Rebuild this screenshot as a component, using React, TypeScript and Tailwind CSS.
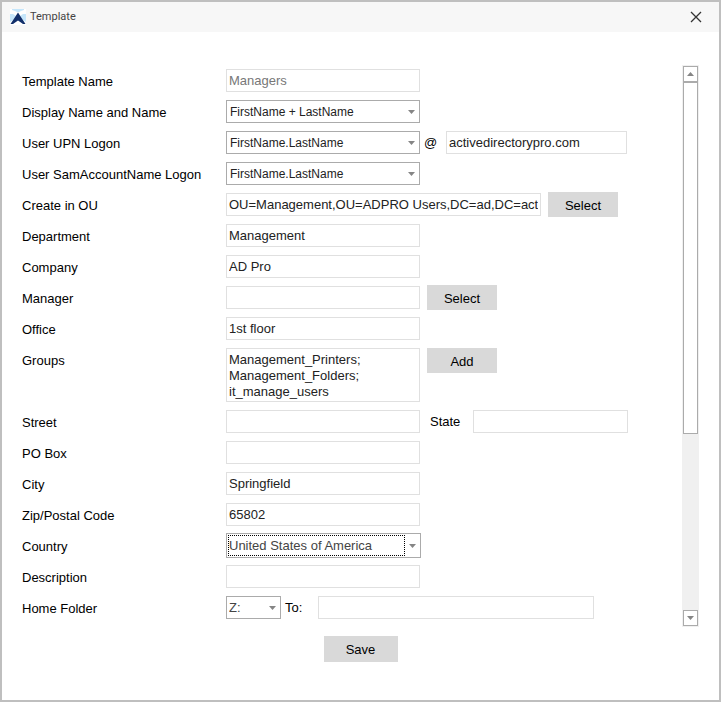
import React, { useState } from 'react'
import clsx from 'clsx'

interface RowProps {
  label: string
  id: string
  tall?: boolean
  children: React.ReactNode
}

const Row: React.FC<RowProps> = ({ label, id, tall, children }) => (
  <div className={clsx('flex gap-[7px]', tall ? 'items-start' : 'h-[23px] items-center')}>
    <label htmlFor={id} className="w-[197px] shrink-0 pt-0.5 leading-[21px] whitespace-nowrap">
      {label}
    </label>
    {children}
  </div>
)

interface TextFieldProps extends React.InputHTMLAttributes<HTMLInputElement> {
  width?: string
}

const TextField: React.FC<TextFieldProps> = ({ width = 'w-[194px]', ...props }) => (
  <input
    type="text"
    className={clsx(
      'h-[23px] border border-[#e0e0e0] bg-white px-0.5 text-[#222] outline-none disabled:text-[#777]',
      width
    )}
    {...props}
  />
)

interface DropDownProps {
  id: string
  options: string[]
  size?: string
  selectClass?: string
  focused?: boolean
}

const DropDown: React.FC<DropDownProps> = ({
  id,
  options,
  size = 'h-[23px] w-[194px]',
  selectClass = 'pl-0.5 text-xs text-[#222]',
  focused,
}) => (
  <div className={clsx('relative flex border border-[#ababab] bg-white p-px', size)}>
    <select
      id={id}
      className={clsx(
        'w-full appearance-none bg-transparent outline-none',
        selectClass,
        focused && 'mr-3.5 border border-dotted border-black'
      )}
    >
      {options.map((option) => (
        <option key={option}>{option}</option>
      ))}
    </select>
    <Arrow className="pointer-events-none absolute top-1/2 right-1 -translate-y-1/2" />
  </div>
)

const Arrow: React.FC<{ up?: boolean; className?: string }> = ({ up, className }) => (
  <svg width="7" height="4" viewBox="0 0 7 4" className={className} aria-hidden="true">
    <path d={up ? 'M3.5 0L7 4H0z' : 'M0 0H7L3.5 4z'} fill="#858585" />
  </svg>
)

interface ButtonProps {
  size?: string
  label?: string
  children: React.ReactNode
}

const Button: React.FC<ButtonProps> = ({ size = 'h-[25px] w-[70px]', label, children }) => (
  <button
    type="button"
    aria-label={label}
    className={clsx('shrink-0 bg-[#d9d9d9] pt-0.5 text-black hover:bg-[#cfcfcf]', size)}
  >
    {children}
  </button>
)

const Logo = () => (
  <svg width="16" height="16" viewBox="0 0 16 16" className="shrink-0" aria-hidden="true">
    <path d="M0 0h16v16H0z" fill="#fff" />
    <path d="M2 0h12v1l-3 1-2 1H7L5 2 2 1z" fill="#c5e6fb" />
    <path d="M0 5h3l3 2-3 4-3 2zM16 5h-3l-3 2 3 4 3 2z" fill="#c5e6fb" />
    <path d="M8 3.5L15.5 15H13l-5-3.5L3 15H.5z" fill="#12306b" />
  </svg>
)

const ScrollBar = () => (
  <div className="mr-5 flex w-[17px] shrink-0 flex-col bg-[#f0f0f0] p-px">
    <button
      type="button"
      aria-label="Scroll up"
      className="flex h-4 items-center justify-center border border-[#ababab] bg-white"
    >
      <Arrow up />
    </button>
    <div className="flex-1">
      <div className="h-2/3 border border-[#ababab] bg-white" />
    </div>
    <button
      type="button"
      aria-label="Scroll down"
      className="flex h-4 items-center justify-center border border-[#ababab] bg-white"
    >
      <Arrow />
    </button>
  </div>
)

const App: React.FC = () => {
  const [groups, setGroups] = useState('Management_Printers;\nManagement_Folders;\nit_manage_users')

  return (
    <div className="flex min-h-screen flex-col border-2 border-[#bfbfbf] bg-white font-['Liberation_Sans',Arial,sans-serif] text-[13px] text-black">
      <header className="flex h-[30px] items-center bg-[#f7f7f7] pr-[17px] pl-2">
        <Logo />
        <h1 className="ml-1 flex-1 font-[Roboto,sans-serif] text-[11px] text-[#444]">Template</h1>
        <button type="button" aria-label="Close">
          <svg width="12" height="12" viewBox="0 0 12 12" aria-hidden="true">
            <path d="M1 1l10 10M11 1L1 11" stroke="#333" strokeWidth="1.3" />
          </svg>
        </button>
      </header>

      <form className="flex flex-1 flex-col pt-[33px]">
        <div className="flex">
          <div className="flex min-w-0 flex-1 flex-col gap-2 pt-1 pb-2 pl-5">
            <Row label="Template Name" id="name">
              <TextField id="name" defaultValue="Managers" disabled />
            </Row>
            <Row label="Display Name and Name" id="display">
              <DropDown id="display" options={['FirstName + LastName', 'LastName + FirstName']} />
            </Row>
            <Row label="User UPN Logon" id="upn">
              <div className="flex items-center gap-1">
                <DropDown id="upn" options={['FirstName.LastName', 'FirstName']} />
                <label htmlFor="domain" className="w-[15px]">@</label>
              </div>
              <TextField id="domain" defaultValue="activedirectorypro.com" width="w-[181px]" />
            </Row>
            <Row label="User SamAccountName Logon" id="sam">
              <DropDown id="sam" options={['FirstName.LastName', 'FirstName']} />
            </Row>
            <Row label="Create in OU" id="ou">
              <TextField
                id="ou"
                defaultValue="OU=Management,OU=ADPRO Users,DC=ad,DC=activedirectorypro,DC=com"
                width="w-[315px]"
              />
              <Button label="Select OU">Select</Button>
            </Row>
            <Row label="Department" id="department">
              <TextField id="department" defaultValue="Management" />
            </Row>
            <Row label="Company" id="company">
              <TextField id="company" defaultValue="AD Pro" />
            </Row>
            <Row label="Manager" id="manager">
              <TextField id="manager" />
              <Button label="Select manager">Select</Button>
            </Row>
            <Row label="Office" id="office">
              <TextField id="office" defaultValue="1st floor" />
            </Row>
            <Row label="Groups" id="groups" tall>
              <textarea
                id="groups"
                value={groups}
                onChange={(e) => setGroups(e.target.value)}
                className="h-[54px] w-[194px] resize-none overflow-hidden border border-[#e0e0e0] px-0.5 pt-[3px] leading-4 text-[#222] outline-none"
              />
              <Button label="Add group">Add</Button>
            </Row>
            <Row label="Street" id="street">
              <TextField id="street" />
              <label htmlFor="state" className="w-[39px] pl-[3px]">State</label>
              <TextField id="state" width="w-[155px]" />
            </Row>
            <Row label="PO Box" id="pobox">
              <TextField id="pobox" />
            </Row>
            <Row label="City" id="city">
              <TextField id="city" defaultValue="Springfield" />
            </Row>
            <Row label="Zip/Postal Code" id="zip">
              <TextField id="zip" defaultValue="65802" />
            </Row>
            <Row label="Country" id="country">
              <DropDown
                id="country"
                options={['United States of America', 'Canada']}
                size="h-[25px] w-[195px]"
                selectClass="text-[#444]"
                focused
              />
            </Row>
            <Row label="Description" id="description">
              <TextField id="description" />
            </Row>
            <Row label="Home Folder" id="drive">
              <div className="flex items-center gap-1">
                <DropDown
                  id="drive"
                  options={['Z:', 'Y:', 'X:']}
                  size="h-[23px] w-[55px]"
                  selectClass="pl-px text-[#444]"
                />
                <label htmlFor="home" className="w-[26px]">To:</label>
              </div>
              <TextField id="home" width="w-[276px]" />
            </Row>
          </div>
          <ScrollBar />
        </div>

        <div className="flex justify-center pt-[9px]">
          <Button size="h-[26px] w-[74px]">Save</Button>
        </div>
      </form>
    </div>
  )
}

export default App
